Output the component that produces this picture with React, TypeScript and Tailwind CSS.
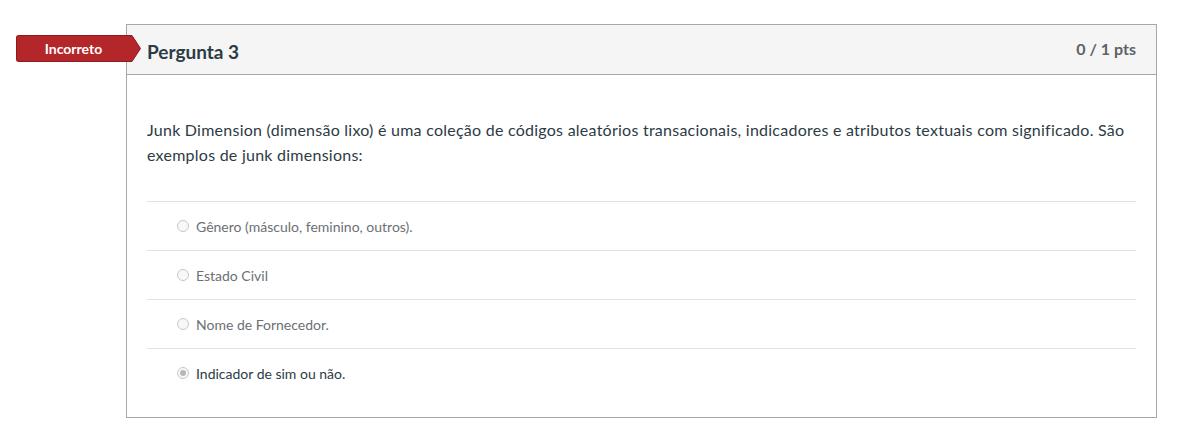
const answers = [
  { text: "Gênero (másculo, feminino, outros).", selected: false },
  { text: "Estado Civil", selected: false },
  { text: "Nome de Fornecedor.", selected: false },
  { text: "Indicador de sim ou não.", selected: true },
];

function Radio({ checked }: { checked: boolean }) {
  return (
    <span className="flex h-[12px] w-[12px] shrink-0 items-center justify-center rounded-full border border-[#c8c8c8] bg-[#f8f8f8]">
      {checked && <span className="h-[6px] w-[6px] rounded-full bg-[#b8b8b8]" />}
    </span>
  );
}

export default function App() {
  return (
    <div className="min-h-[436px] bg-white pt-[24px] font-['Lato','Noto_Sans',sans-serif]">
      <div className="relative ml-[126px] w-[1031px] border border-[#a8a8a8]">
        {/* selo de resultado */}
        <div className="absolute left-[-111px] top-[10px] flex h-[27px] items-center">
          <div className="flex h-[27px] w-[114px] items-center justify-center rounded-l-[3px] border border-r-0 border-[#8c1c1c] bg-[#b3262a] text-[14px] font-bold text-white">
            Incorreto
          </div>
          <svg width="12" height="27" viewBox="0 0 12 27" className="-ml-px">
            <path d="M0 0.5 L3 0.5 L11.5 13.5 L3 26.5 L0 26.5 Z" fill="#b3262a" stroke="#8c1c1c" strokeWidth="1" />
            <rect x="0" y="1" width="1.5" height="25" fill="#b3262a" />
          </svg>
        </div>

        <div className="flex h-[50px] items-center justify-between border-b border-[#a8a8a8] bg-[#f5f5f5] pl-[20px] pr-[20px]">
          <h2 className="pt-[6px] text-[19px] font-bold text-[#2d3b45]">Pergunta 3</h2>
          <span className="pb-[2px] text-[16px] font-bold text-[#5b6268]">0 / 1 pts</span>
        </div>

        <div className="px-[20px] pb-[20px] pt-[42px]">
          <p className="text-[16px] leading-[25px] tracking-[0.25px] text-[#2d3b45]">
            Junk Dimension (dimensão lixo) é uma coleção de códigos aleatórios transacionais, indicadores e atributos textuais com significado. São exemplos de junk dimensions:
          </p>
          <div className="mt-[34px]">
            {answers.map((a) => (
              <div
                key={a.text}
                className="flex h-[49px] items-center gap-[7px] border-t border-[#e2e2e2] pl-[30px]"
              >
                <Radio checked={a.selected} />
                <span className={"text-[14px] " + (a.selected ? "text-[#2d3b45]" : "text-[#6b7075]")}>{a.text}</span>
              </div>
            ))}
          </div>
        </div>
      </div>
    </div>
  );
}
